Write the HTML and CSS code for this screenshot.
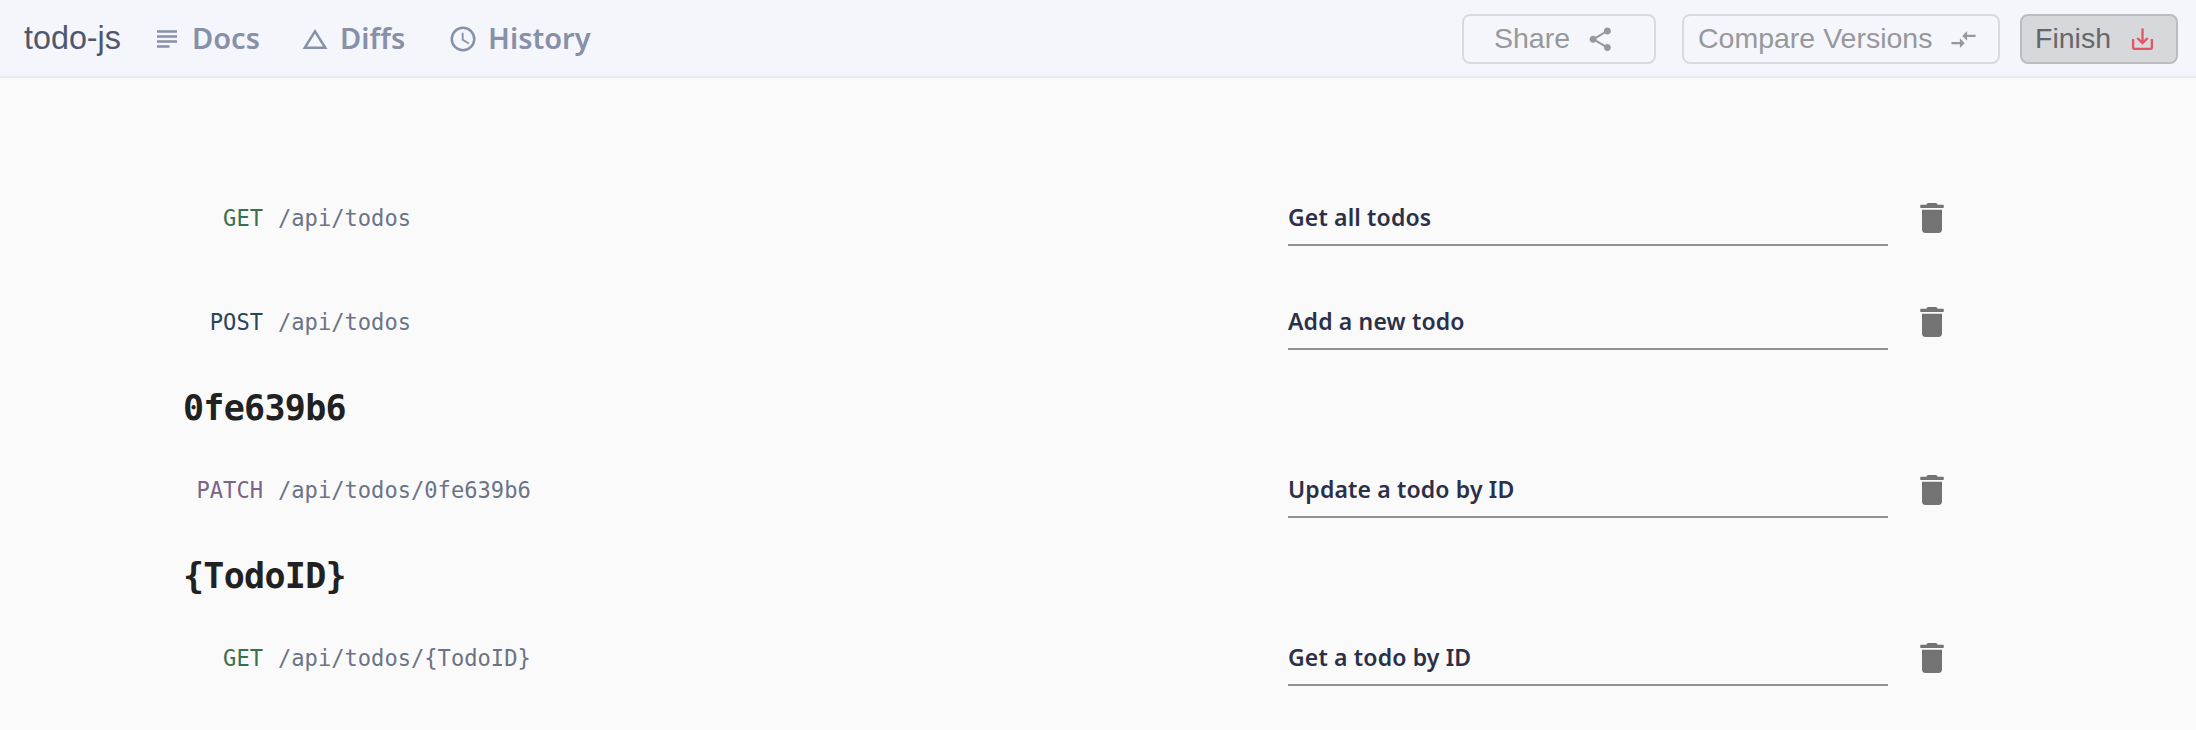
FILE: index.html
```html
<!DOCTYPE html>
<html lang="en">
<head>
<meta charset="utf-8">
<title>todo-js</title>
<link rel="stylesheet" href="styles.css">
</head>
<body>
<header class="topbar">
  <div class="brand">todo-js</div>
  <nav class="nav">
    <a class="link"><svg class="icon" viewBox="0 0 24 24"><path d="M4 15h16v-2H4v2zm0 4h10v-2H4v2zm0-8h16V9H4v2zm0-6v2h16V5H4z"/></svg><span>Docs</span></a>
    <a class="link"><svg class="icon" viewBox="0 0 24 24"><path d="M12 7.770L18.390 18H5.610L12 7.770M12 4L2 20h20L12 4z"/></svg><span>Diffs</span></a>
    <a class="link"><svg class="icon" viewBox="0 0 24 24"><path d="M12 2a10 10 0 1 0 0 20 10 10 0 0 0 0-20zm0 18a8 8 0 1 1 0-16 8 8 0 0 1 0 16zm.5-13H11v6l5.250 3.150.750-1.230-4.500-2.670z"/></svg><span>History</span></a>
  </nav>
  <div class="actions">
    <button class="btn share"><span>Share</span><svg class="icon" viewBox="0 0 24 24"><path d="M18 16.080c-.760 0-1.440.300-1.960.770L8.910 12.700c.050-.230.090-.460.090-.700s-.040-.470-.090-.700l7.050-4.110c.540.500 1.250.810 2.040.810 1.660 0 3-1.340 3-3s-1.340-3-3-3-3 1.340-3 3c0 .240.040.470.090.700L8.040 9.810C7.500 9.310 6.790 9 6 9c-1.660 0-3 1.340-3 3s1.340 3 3 3c.790 0 1.500-.310 2.040-.810l7.120 4.160c-.050.210-.080.430-.080.650 0 1.610 1.310 2.920 2.920 2.920s2.920-1.310 2.920-2.920-1.310-2.920-2.920-2.920z"/></svg></button>
    <button class="btn compare"><span>Compare Versions</span><svg class="icon" viewBox="0 0 24 24"><path d="M9.010 14H2v2h7.010v3L13 15l-3.990-4v3zm5.980-1v-3H22V8h-7.010V5L11 9l3.990 4z"/></svg></button>
    <button class="btn finish"><span>Finish</span><svg class="icon" viewBox="0 0 24 24"><path d="M12 1.500v14M7 10.500l5 5 5-5M3 11.500V20q0 1 1 1h16q1 0 1-1v-8.500"/></svg></button>
  </div>
</header>
<main class="content">
  <section class="row"><span class="method get">GET</span><span class="path">/api/todos</span><div class="field">Get all todos</div><svg class="trash" viewBox="0 0 24 24"><path d="M6 19c0 1.100.900 2 2 2h8c1.100 0 2-.900 2-2V7H6v12zM19 4h-3.500l-1-1h-5l-1 1H5v2h14V4z"/></svg></section>
  <section class="row"><span class="method post">POST</span><span class="path">/api/todos</span><div class="field">Add a new todo</div><svg class="trash" viewBox="0 0 24 24"><path d="M6 19c0 1.100.900 2 2 2h8c1.100 0 2-.900 2-2V7H6v12zM19 4h-3.500l-1-1h-5l-1 1H5v2h14V4z"/></svg></section>
  <h2 class="group">0fe639b6</h2>
  <section class="row"><span class="method patch">PATCH</span><span class="path">/api/todos/0fe639b6</span><div class="field">Update a todo by ID</div><svg class="trash" viewBox="0 0 24 24"><path d="M6 19c0 1.100.900 2 2 2h8c1.100 0 2-.900 2-2V7H6v12zM19 4h-3.500l-1-1h-5l-1 1H5v2h14V4z"/></svg></section>
  <h2 class="group">{TodoID}</h2>
  <section class="row"><span class="method get">GET</span><span class="path">/api/todos/{TodoID}</span><div class="field">Get a todo by ID</div><svg class="trash" viewBox="0 0 24 24"><path d="M6 19c0 1.100.900 2 2 2h8c1.100 0 2-.900 2-2V7H6v12zM19 4h-3.500l-1-1h-5l-1 1H5v2h14V4z"/></svg></section>
</main>
</body>
</html>
```
FILE: styles.css
```css
* { box-sizing: border-box; }
body { margin: 0; height: 730px; overflow: hidden; background: #fafafa; font-family: "Noto Sans", sans-serif; }
.topbar { display: flex; align-items: center; height: 78px; padding: 2px 18px 0 24px; background: #f4f6fb; border-bottom: 2px solid #e8e9eb; }
.brand { width: 128px; padding-bottom: 1px; color: #4f566d; font: 32.3px "Liberation Sans", sans-serif; }
.nav { display: flex; }
.link { display: flex; align-items: center; gap: 10px; width: 148px; height: 30px; color: #8890a8; font-size: 29px; font-weight: 600; line-height: 28px; }
.link span { padding-bottom: 2px; }
.icon { width: 30px; height: 30px; fill: currentColor; flex: none; }
.actions { display: flex; margin-left: auto; }
.btn { display: flex; align-items: center; height: 50px; padding: 0; border: 2px solid #d8dade; border-radius: 8px; background: transparent; color: #97989b; font: 28.5px "Liberation Sans", sans-serif; white-space: nowrap; }
.btn span { padding-bottom: 2px; }
.share { width: 194px; margin-right: 26px; padding-left: 30px; gap: 16px; }
.share .icon { width: 28.500px; height: 28.500px; }
.compare { width: 318px; margin-right: 20px; padding-left: 14px; gap: 17px; }
.compare .icon { width: 29px; height: 29px; }
.finish { width: 158px; padding-left: 13px; gap: 19px; background: #d7d8dc; border-color: #bbbcc0; color: #66676a; }
.finish .icon { width: 25px; height: 25px; color: #e25563; fill: none; stroke: currentColor; stroke-width: 2.2; }
.content { padding-top: 88px; }
.row { display: flex; align-items: center; height: 104px; }
.method, .path { font: 22.1px "DejaVu Sans Mono", monospace; }
.method { width: 263px; text-align: right; }
.path { width: 1010px; margin-left: 15px; color: #6b7386; }
.get { color: #38704c; }
.post { color: #2b4558; }
.patch { color: #7b6389; }
.field { width: 600px; height: 56px; border-bottom: 2px solid #929292; color: #2b3048; font-size: 23px; font-weight: 600; line-height: 54px; letter-spacing: .15px; white-space: nowrap; }
.trash { width: 40px; height: 40px; margin-left: 24px; fill: #737373; }
.group { height: 64px; margin: 0; padding-left: 183px; color: #212121; font: bold 35px/68px "DejaVu Sans Mono", monospace; letter-spacing: -.7px; }
```
